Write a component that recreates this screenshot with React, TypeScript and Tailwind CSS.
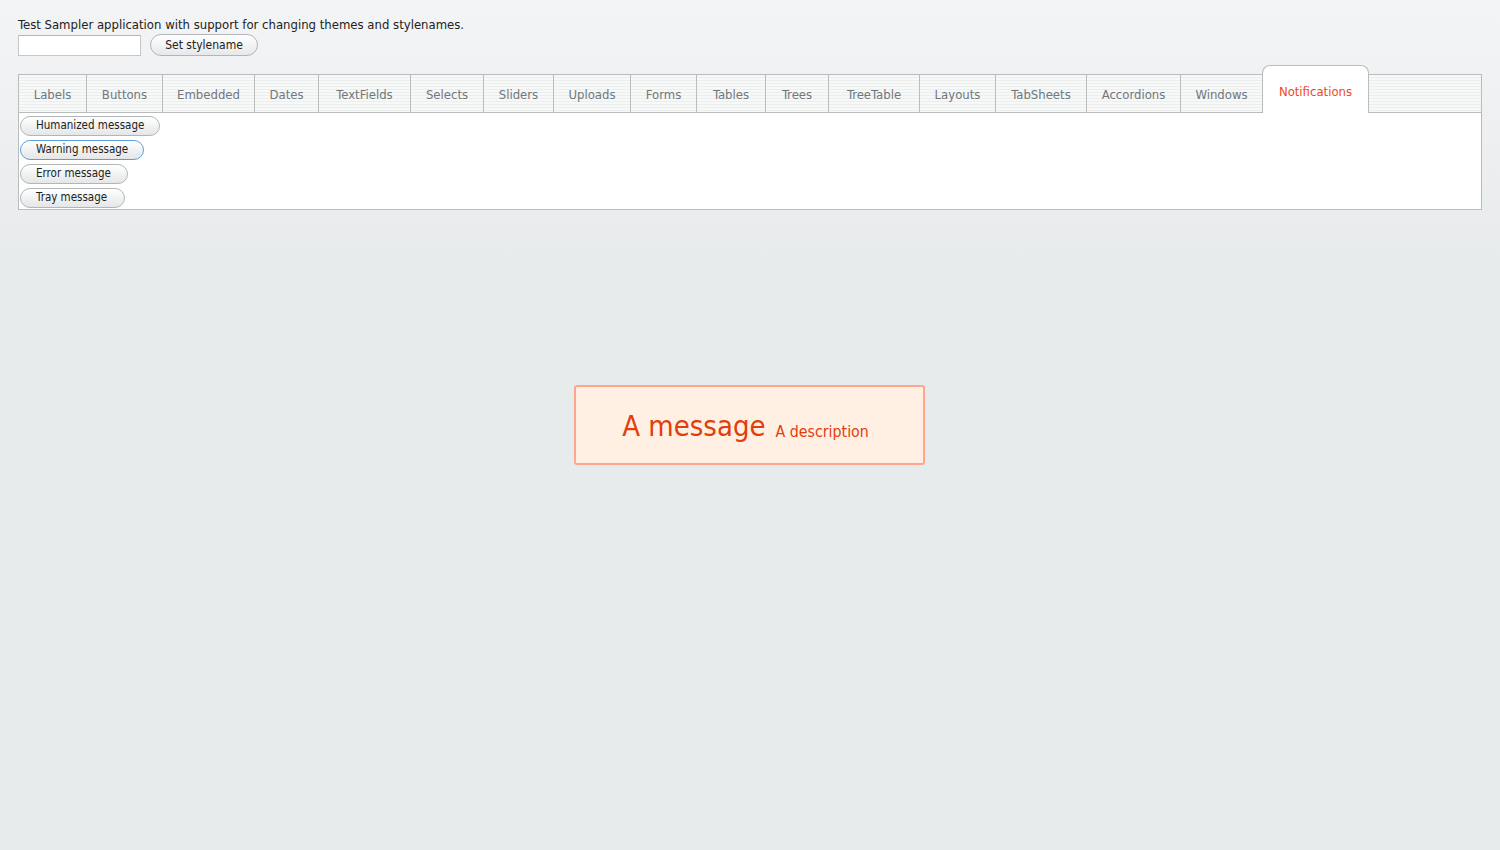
import { useState } from "react";

const tabs = [
  { label: "Labels", w: 68 },
  { label: "Buttons", w: 76 },
  { label: "Embedded", w: 92 },
  { label: "Dates", w: 64 },
  { label: "TextFields", w: 92 },
  { label: "Selects", w: 73 },
  { label: "Sliders", w: 70 },
  { label: "Uploads", w: 77 },
  { label: "Forms", w: 66 },
  { label: "Tables", w: 69 },
  { label: "Trees", w: 63 },
  { label: "TreeTable", w: 91 },
  { label: "Layouts", w: 76 },
  { label: "TabSheets", w: 91 },
  { label: "Accordions", w: 94 },
  { label: "Windows", w: 81 },
];

const buttons = [
  { label: "Humanized message", w: "w-[140px]", focused: false },
  { label: "Warning message", w: "w-[124px]", focused: true },
  { label: "Error message", w: "w-[108px]", focused: false },
  { label: "Tray message", w: "w-[105px]", focused: false },
];

const stripes =
  "bg-[repeating-linear-gradient(to_bottom,#f7f8f8_0px,#f7f8f8_2px,#eceeee_2px,#eceeee_3px)]";

const App = () => {
  const [stylename, setStylename] = useState("");

  return (
    <div
      className="min-h-[850px] bg-[linear-gradient(to_bottom,#f3f4f5_0px,#e8ebec_260px,#e8ebec_100%)] text-[13px] text-[#222]"
      style={{ fontFamily: '"DejaVu Sans Condensed", "DejaVu Sans", sans-serif' }}
    >
      <div className="px-[18px] pt-[17px]">
        <div className="leading-[16px]">
          Test Sampler application with support for changing themes and stylenames.
        </div>
        <div className="flex items-center gap-[9px] mt-[1px]">
          <input
            value={stylename}
            onChange={(e) => setStylename(e.target.value)}
            className="w-[123px] h-[21px] bg-white border border-[#c5c7c8] border-t-[#b4b6b7] outline-none px-1 text-[13px]"
          />
          <button className="h-[22px] w-[108px] rounded-full border border-[#b3b5b6] bg-[linear-gradient(to_bottom,#ffffff,#e6e8e9)] text-[12px] text-[#222] leading-none">
            Set stylename
          </button>
        </div>

        {/* Tab sheet */}
        <div className="mt-[9px] w-[1464px]">
          <div className="flex items-end h-[48px]">
            <div className={`flex items-end h-[39px] border-t border-l border-b border-[#b9bcbd] ${stripes}`}>
              {tabs.map((t, i) => (
                <div
                  key={t.label}
                  style={{ width: t.w }}
                  className={`h-full flex items-center justify-center pt-[2px] text-[13px] text-[#6f777b] ${
                    i < tabs.length - 1 ? "border-r border-[#b9bcbd]" : ""
                  }`}
                >
                  {t.label}
                </div>
              ))}
            </div>
            <div className="h-[48px] w-[107px] bg-white border border-b-0 border-[#b9bcbd] rounded-t-[8px] flex items-start justify-center pt-[16px] text-[13px] text-[#f0471c]">
              Notifications
            </div>
            <div className={`flex-1 h-[39px] border-t border-r border-b border-[#b9bcbd] ${stripes}`} />
          </div>
          <div className="bg-white border border-t-0 border-[#b9bcbd] h-[97px] pt-[3px] pl-[1px] flex flex-col gap-[4px]">
            {buttons.map((b) => (
              <button
                key={b.label}
                className={`${b.w} h-[20px] rounded-full border ${
                  b.focused ? "border-[#5a9ee0]" : "border-[#b3b5b6]"
                } bg-[linear-gradient(to_bottom,#ffffff,#e4e6e7)] text-[11.5px] text-[#222] leading-none text-left pl-[15px]`}
              >
                {b.label}
              </button>
            ))}
          </div>
        </div>
      </div>

      {/* Notification */}
      <div className="flex justify-center mt-[175px]">
        <div className="ml-[-1px] w-[351px] h-[80px] bg-[#fff0e3] border-2 border-[#ffa68e] rounded-[3px] flex items-center justify-center gap-[10px] text-[#e23e0c] pt-[3px] pr-[8px]">
          <span className="text-[29px] leading-none">A message</span>
          <span className="text-[15.8px] leading-none mt-[10px]">A description</span>
        </div>
      </div>
    </div>
  );
};

export default App;
